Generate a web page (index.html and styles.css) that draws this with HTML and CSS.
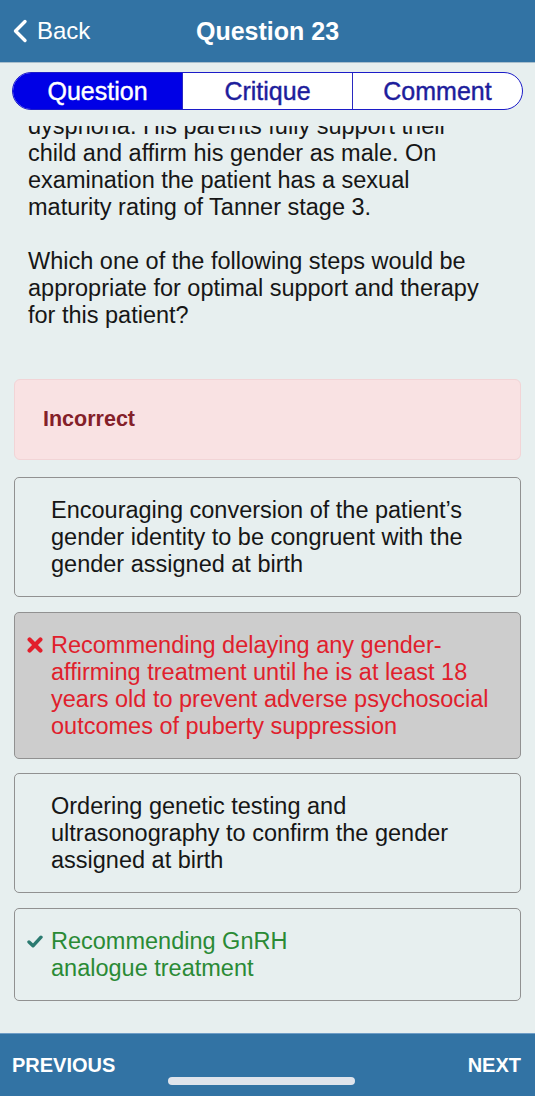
FILE: index.html
```html
<!DOCTYPE html>
<html lang="en">
<head>
  <meta charset="UTF-8">
  <title>Question 23</title>
  <link rel="stylesheet" href="styles.css">
</head>
<body>
  <header class="nav-bar">
    <a class="back" href="#">
      <svg width="16" height="24" viewBox="0 0 16 24"><path d="M13 2.5 L3.5 12 L13 21.5" fill="none" stroke="#fff" stroke-width="3.4" stroke-linecap="round" stroke-linejoin="round"/></svg>
      Back
    </a>
    <h1 class="title">Question 23</h1>
    <span></span>
  </header>

  <!-- Question / Critique / Comment switch -->
  <nav class="tabs">
    <div class="segmented">
      <span class="segment active">Question</span>
      <span class="segment">Critique</span>
      <span class="segment">Comment</span>
    </div>
  </nav>

  <main class="content">
    <div class="scroll">
      <p class="stem">dysphoria. His parents fully support their child and affirm his gender as male. On examination the patient has a sexual maturity rating of Tanner stage 3.</p>
      <p class="stem">Which one of the following steps would be appropriate for optimal support and therapy for this patient?</p>

      <div class="result">Incorrect</div>

      <ul class="options">
        <li class="option">
          <span class="mark"></span>
          <span class="answer">Encouraging conversion of the patient’s gender identity to be congruent with the gender assigned at birth</span>
        </li>
        <li class="option picked wrong">
          <span class="mark">
            <svg width="16" height="16" viewBox="0 0 16 16"><path d="M2.6 2.6 L13.4 13.4 M13.4 2.6 L2.6 13.4" stroke="#e21f2b" stroke-width="4.2" stroke-linecap="round"/></svg>
          </span>
          <span class="answer">Recommending delaying any gender-affirming treatment until he is at least 18 years old to prevent adverse psychosocial outcomes of puberty suppression</span>
        </li>
        <li class="option">
          <span class="mark"></span>
          <span class="answer">Ordering genetic testing and ultrasonography to confirm the gender assigned at birth</span>
        </li>
        <li class="option right">
          <span class="mark">
            <svg width="16" height="13" viewBox="0 0 16 13"><path d="M2 7 L6 10.8 L14 2.2" fill="none" stroke="#2b7a70" stroke-width="3.4" stroke-linecap="round" stroke-linejoin="round"/></svg>
          </span>
          <span class="answer">Recommending GnRH<br>analogue treatment</span>
        </li>
      </ul>
    </div>
  </main>

  <footer class="bottom-bar">
    <a href="#">PREVIOUS</a>
    <a href="#">NEXT</a>
    <div class="home-indicator"></div>
  </footer>
</body>
</html>
```

FILE: styles.css
```css
html, body {
  margin: 0;
  padding: 0;
}
body {
  width: 535px;
  height: 1096px;
  overflow: hidden;
  display: flex;
  flex-direction: column;
  background: #e7efef;
  font-family: "Liberation Sans", Arial, sans-serif;
  color: #161616;
}
a {
  color: inherit;
  text-decoration: none;
}

/* Top navigation bar */
.nav-bar {
  height: 62px;
  flex: none;
  display: grid;
  grid-template-columns: 1fr auto 1fr;
  align-items: center;
  background: #3273a4;
  border-bottom: 1px solid #a9bfcd;
  color: #fff;
}
.back {
  display: flex;
  align-items: center;
  gap: 9px;
  padding-left: 12px;
  font-size: 24px;
}
.title {
  margin: 0;
  font-size: 25px;
  font-weight: bold;
}

/* Segmented control */
.tabs {
  flex: none;
  padding: 9px 12px 16px 12px;
}
.segmented {
  display: flex;
  height: 38px;
  border: 1px solid #1c1cc8;
  border-radius: 19px;
  overflow: hidden;
  background: #fff;
  box-sizing: border-box;
}
.segment {
  flex: 1;
  display: flex;
  align-items: center;
  justify-content: center;
  font-size: 25px;
  -webkit-text-stroke: 0.4px currentColor;
  color: #1d1d9c;
  border-left: 1px solid #2a2ac0;
}
.segment:first-child {
  border-left: none;
}
.segment.active {
  background: #0000e6;
  color: #fff;
}

/* Scrolling question body */
.content {
  flex: 1;
  overflow: hidden;
}
.scroll {
  margin-top: -13px;
  padding: 0 14px;
}
.stem {
  margin: 0 0 27px 0;
  padding: 0 26px 0 14px;
  font-size: 23.5px;
  line-height: 27px;
}
.result {
  margin-top: 50px;
  height: 81px;
  box-sizing: border-box;
  display: flex;
  align-items: center;
  padding-left: 28px;
  background: #f9e2e3;
  border: 1px solid #f2d4d6;
  border-radius: 6px;
  color: #842029;
  font-size: 21.5px;
  font-weight: bold;
}
.options {
  list-style: none;
  margin: 17px 0 0 0;
  padding: 0;
  display: flex;
  flex-direction: column;
  gap: 14.5px;
}
.option {
  display: flex;
  align-items: flex-start;
  gap: 8px;
  padding: 19px 14px 18px 12px;
  border: 1px solid #919191;
  border-radius: 5px;
  font-size: 23.5px;
  line-height: 27px;
}
.mark {
  flex: none;
  width: 16px;
  height: 27px;
  display: flex;
  align-items: center;
  justify-content: center;
}
.option.picked {
  background: #cdcdcd;
}
.option.wrong .answer {
  color: #e0202c;
}
.option.right .answer {
  color: #2a8a35;
}

/* Bottom bar */
.bottom-bar {
  position: relative;
  height: 62px;
  flex: none;
  display: flex;
  align-items: center;
  justify-content: space-between;
  padding: 0 14px 0 12px;
  background: #3273a4;
  border-top: 1px solid #6f9dc6;
  color: #fff;
  font-size: 20px;
  font-weight: bold;
}
.home-indicator {
  position: absolute;
  left: 168px;
  bottom: 11px;
  width: 187px;
  height: 8px;
  border-radius: 4px;
  background: #dfe4ec;
}
```
